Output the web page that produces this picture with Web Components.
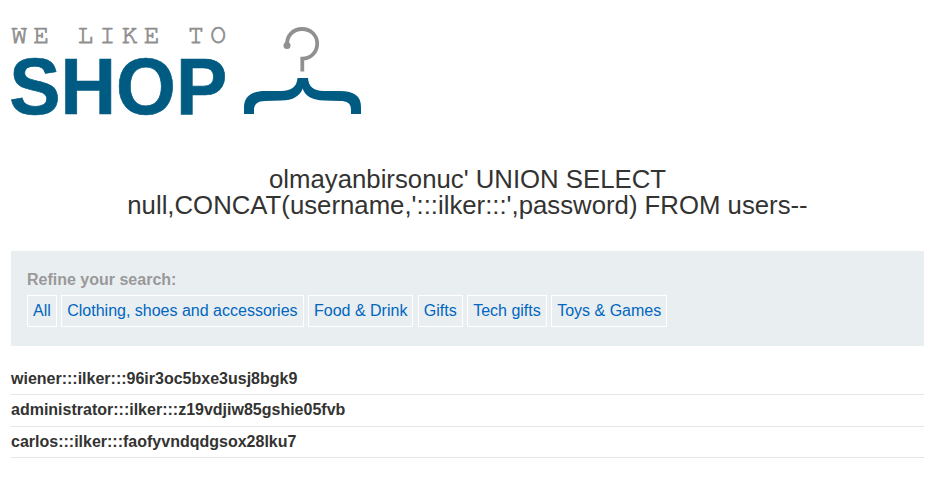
<!DOCTYPE html>
<html lang="en">
<head>
<meta charset="utf-8">
<title>We like to shop</title>
<style>
body{margin:0;background:#fff;color:#333332;font:16px/18px "Liberation Sans",Arial,sans-serif}
</style>
</head>
<body>
<shop-page></shop-page>
<script>
const define = (name, html) => customElements.define(name, class extends HTMLElement {
  constructor() {
    super();
    this.attachShadow({mode: 'open'}).innerHTML = html;
  }
});

define('shop-logo', `
<style>
:host{display:block;width:363px;height:120px}
svg{display:block;overflow:visible}
.tag{font:26.4px FreeMono,"Liberation Mono",monospace;letter-spacing:6.27px;fill:#909090;stroke:#909090;stroke-width:.8px}
.name{font:bold 79px "Liberation Sans",Arial,sans-serif;fill:#005b82;stroke:#005b82;stroke-width:.7px}
</style>
<svg width="363" height="120" viewBox="0 0 363 120">
  <text class="tag" x="11.2" y="43">WE LIKE TO</text>
  <text class="name" x="9.2" y="113.6" textLength="218" lengthAdjust="spacingAndGlyphs">SHOP</text>
  <path d="M287 44.5C287 35.5 293 29 302 29C311 29 317.2 35.5 317.2 43.5C317.2 52 311 58.7 302.3 58.7V71.5" fill="none" stroke="#909090" stroke-width="3.8"/>
  <circle cx="287" cy="45.5" r="3.5" fill="#909090"/>
  <path d="M297.5 78H308C308.5 86 313 91 324 91H340C354 91 361 96 361 107V114H351V110C351 103 347 101 340 101L324 100.5C312 100 305 96 302.7 88.5C300 96 293 100.5 281 100.5L265 101C258 101 254 104 254 110V114H244V107C244 97 251 91 265 91H281C292 91 297 86 297.5 78Z" fill="#005b82"/>
</svg>`);

define('page-title', `
<style>
:host{display:block;text-align:center}
h1{margin:0;font-size:25.76px;line-height:26px;font-weight:400}
</style>
<h1><slot></slot></h1>`);

define('filter-link', `
<style>
:host{display:block}
a{display:block;padding:6px 5px;border:1px solid #fff;color:#0066c0;line-height:18px;white-space:nowrap;text-decoration:none}
</style>
<a href="#"><slot></slot></a>`);

define('search-filters', `
<style>
:host{display:block;box-sizing:border-box;height:95px;padding:20px 16px 0;background:#e9eef1}
.label{font-weight:700;color:#999;margin-bottom:6px}
nav{display:flex;gap:4.44px}
</style>
<div class="label">Refine your search:</div>
<nav><slot></slot></nav>`);

define('result-row', `
<style>
:host{display:block;box-sizing:border-box;height:31.5px;padding-top:6px;border-bottom:1px solid #e5e5e5;font-weight:700}
</style>
<slot></slot>`);

define('shop-page', `
<style>
:host{display:block}
page-title{padding:46px 11px 0}
search-filters{margin:33px 11px 17.5px}
section{padding:0 11px}
</style>
<shop-logo></shop-logo>
<page-title>olmayanbirsonuc' UNION SELECT<br>null,CONCAT(username,':::ilker:::',password) FROM users--</page-title>
<search-filters>
  <filter-link>All</filter-link>
  <filter-link>Clothing, shoes and accessories</filter-link>
  <filter-link>Food &amp; Drink</filter-link>
  <filter-link>Gifts</filter-link>
  <filter-link>Tech gifts</filter-link>
  <filter-link>Toys &amp; Games</filter-link>
</search-filters>
<section>
  <result-row>wiener:::ilker:::96ir3oc5bxe3usj8bgk9</result-row>
  <result-row>administrator:::ilker:::z19vdjiw85gshie05fvb</result-row>
  <result-row>carlos:::ilker:::faofyvndqdgsox28lku7</result-row>
</section>`);
</script>
</body>
</html>
